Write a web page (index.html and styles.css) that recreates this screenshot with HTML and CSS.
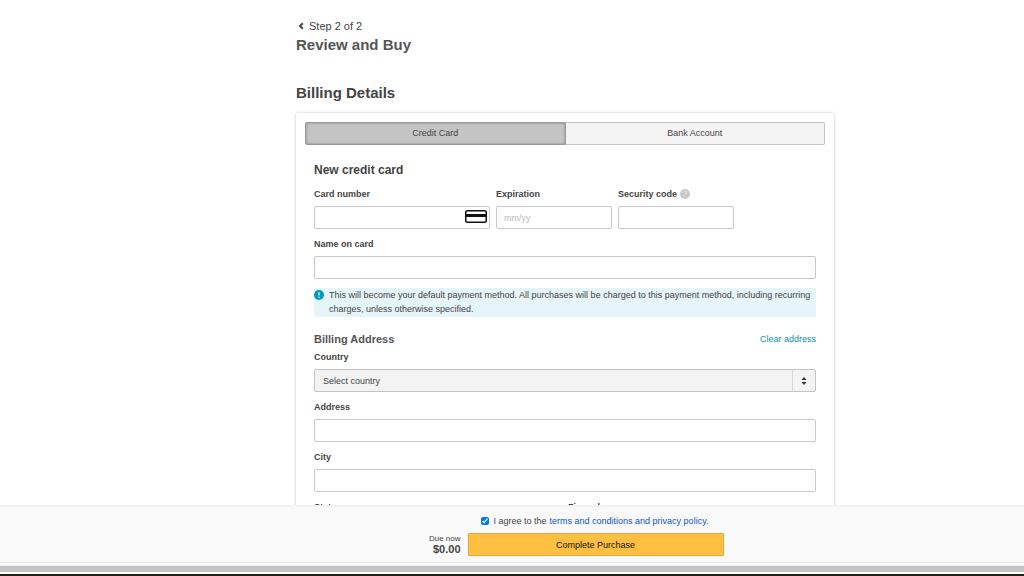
FILE: index.html
```html
<!DOCTYPE html>
<html lang="en">
<head>
<meta charset="UTF-8" />
<meta name="viewport" content="width=device-width, initial-scale=1" />
<title>Review and Buy</title>
<link rel="stylesheet" href="styles.css">
</head>
<body>
  <main class="page">
    <div class="content">
      <a class="step-link" href="#">
        <svg class="chevron" viewBox="0 0 6 8" aria-hidden="true"><path d="M4.800 1.200 2 4l2.800 2.800" fill="none" stroke="currentColor" stroke-width="2" /></svg>
        Step 2 of 2
      </a>
      <h1>Review and Buy</h1>
      <h2>Billing Details</h2>

      <form class="panel" id="billing">
        <div class="tabs">
          <button type="button" class="tab active">Credit Card</button>
          <button type="button" class="tab">Bank Account</button>
        </div>

        <div class="panel-body">
          <h3 class="card-title">New credit card</h3>
          <div class="card-row">
            <div class="field card-number">
              <label for="cardNumber">Card number</label>
              <div class="card-input">
                <input type="text" id="cardNumber" />
                <svg class="card-icon" viewBox="0 0 22 13" aria-hidden="true">
                  <rect x="0.75" y="0.75" width="20.5" height="11.5" rx="1.5" fill="#fff" stroke="#111" stroke-width="1.5" />
                  <rect x="1" y="4" width="20" height="3" fill="#111" />
                </svg>
              </div>
            </div>
            <div class="field">
              <label for="expiration">Expiration</label>
              <input type="text" id="expiration" placeholder="mm/yy" />
            </div>
            <div class="field">
              <div class="label-row">
                <label for="securityCode">Security code</label>
                <span class="help">?</span>
              </div>
              <input type="text" id="securityCode" />
            </div>
          </div>
          <div class="field">
            <label for="cardName">Name on card</label>
            <input type="text" id="cardName" />
          </div>

          <div class="note">
            <svg class="note-icon" viewBox="0 0 10 10" aria-hidden="true">
              <circle cx="5" cy="5" r="5" fill="#0099bf" />
              <path d="M5 2.200v3.300M5 6.700v1.200" stroke="#fff" stroke-width="1.2" />
            </svg>
            <p>This will become your default payment method. All purchases will be charged to this payment method, including recurring charges, unless otherwise specified.</p>
          </div>

          <div class="address-head">
            <h3>Billing Address</h3>
            <a href="#">Clear address</a>
          </div>
          <div class="field">
            <label for="country">Country</label>
            <div class="select">
              <select id="country">
                <option>Select country</option>
              </select>
              <span class="select-arrows">
                <svg viewBox="0 0 6 8" aria-hidden="true"><path d="M3 0 5.500 3h-5zM3 8 .5 5h5z" fill="#333" /></svg>
              </span>
            </div>
          </div>
          <div class="field">
            <label for="address">Address</label>
            <input type="text" id="address" />
          </div>
          <div class="field">
            <label for="city">City</label>
            <input type="text" id="city" />
          </div>
          <div class="half-row">
            <div class="field">
              <label for="state">State</label>
              <input type="text" id="state" />
            </div>
            <div class="field">
              <label for="zip">Zip code</label>
              <input type="text" id="zip" />
            </div>
          </div>
        </div>
      </form>
    </div>
  </main>

  <footer class="checkout">
    <div class="checkout-inner">
      <div class="agree">
        <input type="checkbox" id="agree" checked />
        <label for="agree">I agree to the</label>
        <a href="#">terms and conditions and privacy policy.</a>
      </div>
      <div class="total">
        <span>Due now</span>
        <strong>$0.00</strong>
      </div>
      <button type="submit" form="billing" class="purchase">Complete Purchase</button>
    </div>
  </footer>
  <div class="scroll-strip"></div>
</body>
</html>
```

FILE: styles.css
```css
* {
  box-sizing: border-box;
}
body {
  margin: 0;
  height: 100vh;
  display: flex;
  flex-direction: column;
  overflow: hidden;
  background: #fff;
  color: #444;
  font-family: "Liberation Sans", Arial, sans-serif;
  font-size: 9px;
  line-height: 14px;
}
h1, h2, h3, p {
  margin: 0;
}
a {
  text-decoration: none;
}
button, input, select {
  font-family: inherit;
  font-size: inherit;
  color: inherit;
}

/* page */
.page {
  flex: 1;
  min-height: 0;
  overflow: hidden;
  padding: 19px 0 0 106px;
}
.content {
  max-width: 538px;
  margin: 0 auto;
}
.step-link {
  display: flex;
  align-items: center;
  gap: 5px;
  padding-left: 2px;
  color: #444;
  font-size: 11px;
}
.chevron {
  width: 6px;
  height: 8px;
}
h1, h2 {
  font-size: 15px;
  line-height: 22px;
}
h1 {
  margin-top: 1px;
  color: #555;
}
h2 {
  margin: 26px 0 9px;
}
h3 {
  font-size: 12px;
  line-height: 20px;
}

/* panel */
.panel {
  padding: 9px;
  border-radius: 2px;
  box-shadow: 0 0 3px rgba(0, 0, 0, 0.25);
}
.tabs {
  display: flex;
}
.tab {
  flex: 1;
  height: 23px;
  padding: 0 0 2px;
  background: #f4f4f4;
  border: 1px solid #c4c4c4;
  border-left: none;
  border-radius: 0 2px 2px 0;
}
.tab.active {
  background: #c4c4c4;
  border: 1px solid #999;
  border-radius: 2px 0 0 2px;
  box-shadow: inset 0 0 3px rgba(0, 0, 0, 0.3);
}
.panel-body {
  padding: 15px 9px 0;
}
.card-title {
  margin-bottom: 7px;
}
.card-row {
  display: grid;
  grid-template-columns: 176px 116px 116px;
  gap: 6px;
}
.field {
  margin-bottom: 8px;
}
.field label {
  display: block;
  margin-bottom: 5px;
  font-weight: bold;
}
.field input {
  display: block;
  width: 100%;
  height: 23px;
  padding: 0 7px;
  border: 1px solid #c8c8c8;
  border-radius: 2px;
  background: #fff;
}
.field input::placeholder {
  color: #bbb;
}
.card-input, .select {
  position: relative;
}
.card-icon {
  position: absolute;
  top: 4px;
  right: 3px;
  width: 22px;
  height: 13px;
}
.label-row {
  display: flex;
  gap: 3px;
}
.help {
  width: 10px;
  height: 10px;
  margin-top: 2px;
  border-radius: 50%;
  background: #c8c8c8;
  color: #eee;
  font-size: 8px;
  line-height: 10px;
  text-align: center;
}
.note {
  display: flex;
  gap: 5px;
  margin-top: 9px;
  padding-bottom: 1px;
  background: #e5f5fa;
}
.note-icon {
  flex: none;
  width: 10px;
  height: 10px;
  margin-top: 2px;
}
.address-head {
  display: flex;
  justify-content: space-between;
  align-items: center;
  margin: 12px 0 1px;
}
.address-head h3 {
  font-size: 11px;
  color: #555;
}
.address-head a {
  color: #0e8fae;
}
.select select {
  display: block;
  width: 100%;
  height: 23px;
  padding: 0 30px 0 8px;
  appearance: none;
  border: 1px solid #c4c4c4;
  border-radius: 2px;
  background: #f3f3f3;
}
.select-arrows {
  position: absolute;
  top: 1px;
  right: 1px;
  bottom: 1px;
  width: 23px;
  display: flex;
  align-items: center;
  justify-content: center;
  border-left: 1px solid #d8d8d8;
  pointer-events: none;
}
.select-arrows svg {
  width: 6px;
  height: 8px;
}
.half-row {
  display: grid;
  grid-template-columns: 1fr 1fr;
  gap: 6px;
}

/* checkout bar */
.checkout {
  padding: 7px 0 6px 130px;
  background: #f9f9f9;
  border-top: 2px solid #f2f2f2;
  border-bottom: 1px solid #e6e6e6;
}
.checkout-inner {
  display: grid;
  grid-template-columns: 30px 256px;
  column-gap: 7px;
  row-gap: 5px;
  justify-content: center;
}
.agree {
  grid-column: 2;
  display: flex;
  align-items: center;
  padding-left: 13px;
}
.agree input {
  width: 8px;
  height: 8px;
  margin: 0 5px 0 0;
}
.agree a {
  margin-left: 3px;
  color: #1155cc;
}
.total {
  display: flex;
  flex-direction: column;
  align-items: flex-end;
  white-space: nowrap;
  font-size: 8px;
  line-height: 11px;
}
.total strong {
  font-size: 11px;
}
.purchase {
  height: 23px;
  padding: 0;
  background: #ffbf40;
  border: 1px solid #e0aa3c;
  border-radius: 1px;
  color: #111;
}

/* scrollbar track and the edge of the window */
.scroll-strip {
  height: 11px;
  margin-top: 2px;
  background: #c4c4c4;
  border-top: 1px solid #eee;
  border-bottom: 2px solid #1c2418;
  box-shadow: inset 0 -2px #fff;
}
```
